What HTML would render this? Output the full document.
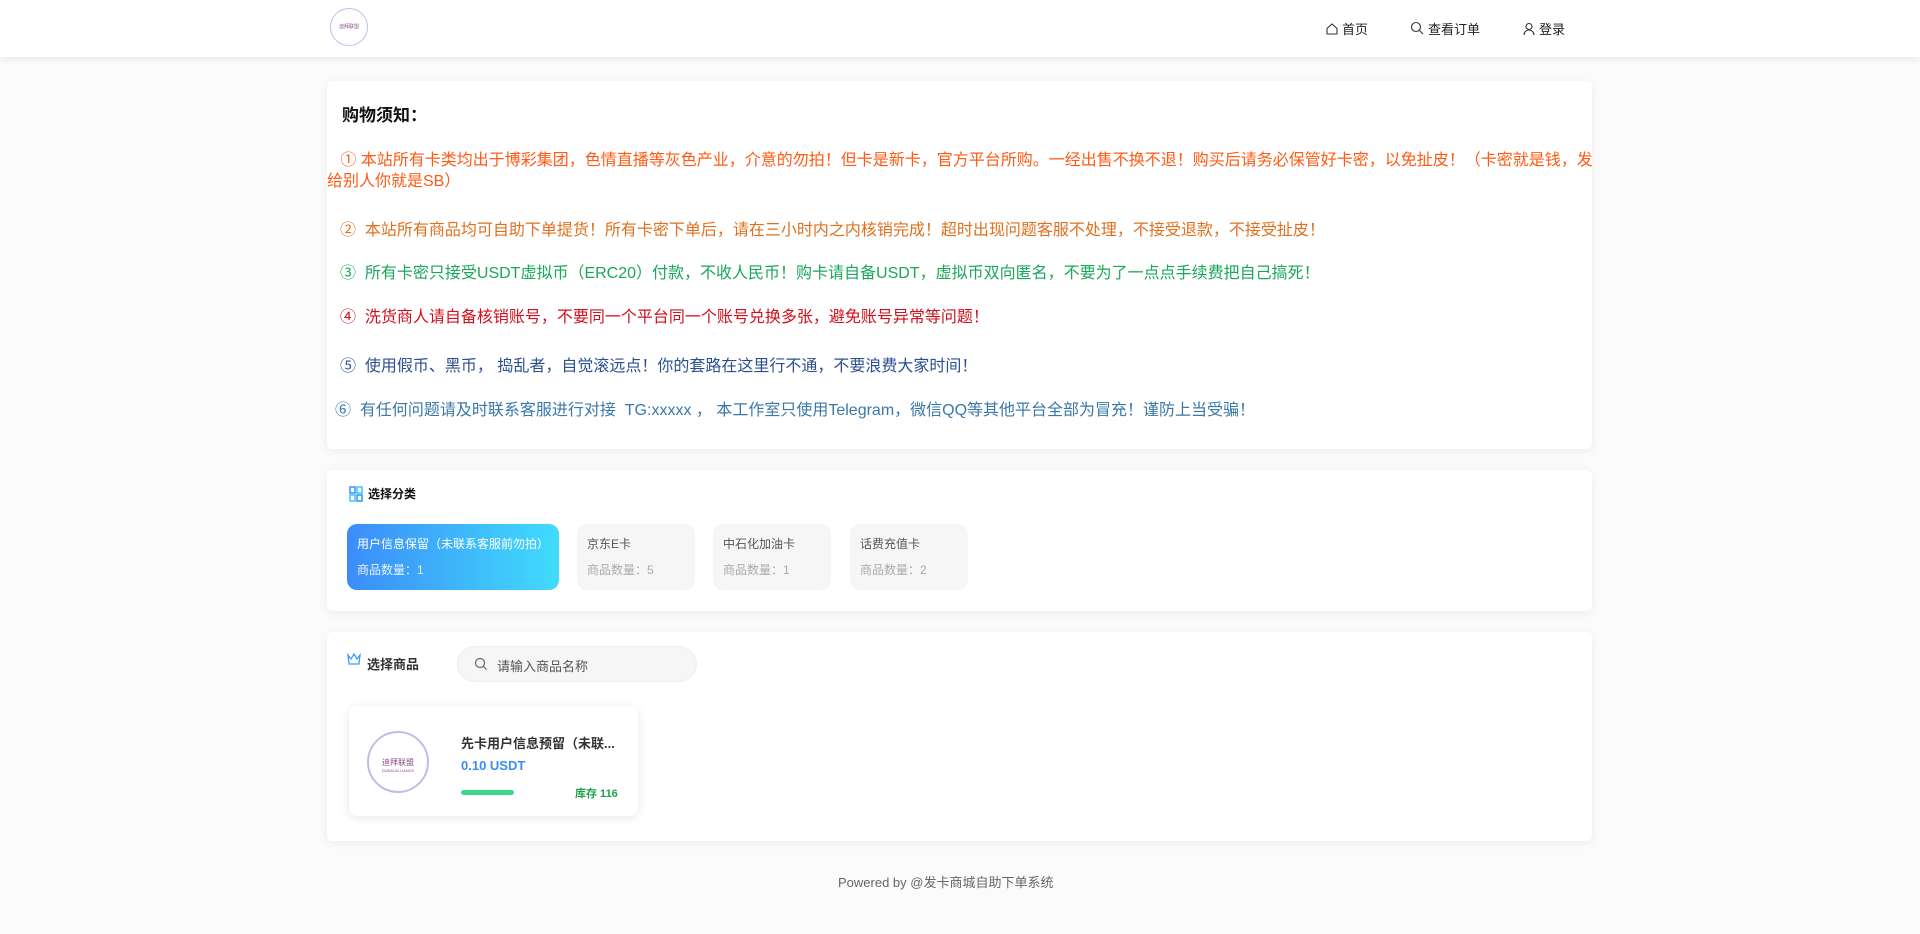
<!DOCTYPE html>
<html><head><meta charset="utf-8"><style>
*{margin:0;padding:0;box-sizing:border-box}
body{width:1920px;height:934px;background:#fbfbfc;font-family:"Liberation Sans","Noto Sans CJK SC",sans-serif;position:relative;overflow:hidden}
.hdr{position:absolute;left:0;top:0;width:1920px;height:57px;background:#fff;box-shadow:0 2px 8px rgba(0,0,0,.08)}
.logo{position:absolute;left:330px;top:8px;width:38px;height:38px;border-radius:50%;border:1px solid #c8b8e8;background:#fff;font-size:5px;color:#8a4a8a;text-align:center;padding-top:14px}
.nav{position:absolute;top:19px;font-size:13px;color:#222;display:flex;align-items:center;gap:3px}
.card{position:absolute;left:327px;width:1265px;background:#fff;border-radius:6px;box-shadow:0 2px 10px rgba(0,0,0,.06)}
.t{position:absolute;font-size:16px;white-space:nowrap}
.cat{position:absolute;top:54px;height:66px;border-radius:10px;background:#f6f6f6;padding:11px 10px;font-size:12px;color:#555}
.cat .n{margin-top:9px;color:#aaa}
</style></head><body>
<div class="hdr">
 <div class="logo">迪拜联盟</div>
 <div class="nav" style="left:1325px"><svg width="14" height="14" viewBox="0 0 14 14"><path d="M2 6.5L7 2l5 4.5V12H2z" fill="none" stroke="#333" stroke-width="1.1"/></svg>首页</div>
 <div class="nav" style="left:1410px"><svg width="15" height="15" viewBox="0 0 15 15"><circle cx="6" cy="6" r="4.5" fill="none" stroke="#333" stroke-width="1.1"/><path d="M9.5 9.5L13 13" stroke="#333" stroke-width="1.1"/></svg>查看订单</div>
 <div class="nav" style="left:1522px"><svg width="14" height="14" viewBox="0 0 14 14"><circle cx="7" cy="4.5" r="3" fill="none" stroke="#333" stroke-width="1.1"/><path d="M2 13c0-3 2.5-5 5-5s5 2 5 5" fill="none" stroke="#333" stroke-width="1.1"/></svg>登录</div>
</div>

<div class="card" style="top:81px;height:368px">
 <div class="t" style="left:15px;top:20px;font-size:17px;font-weight:bold;color:#111">购物须知：</div>
 <div style="position:absolute;left:0;top:69px;width:1279px;font-size:16px;line-height:21px;color:#ff5a14;white-space:normal">&nbsp;&nbsp;&nbsp;① 本站所有卡类均出于博彩集团，色情直播等灰色产业，介意的勿拍！但卡是新卡，官方平台所购。一经出售不换不退！购买后请务必保管好卡密，以免扯皮！（卡密就是钱，发给别人你就是SB）</div>
 <div class="t" style="left:13px;top:135px;color:#e0701c">② &nbsp;本站所有商品均可自助下单提货！所有卡密下单后，请在三小时内之内核销完成！超时出现问题客服不处理，不接受退款，不接受扯皮！</div>
 <div class="t" style="left:13px;top:178px;color:#18a858">③ &nbsp;所有卡密只接受USDT虚拟币（ERC20）付款，不收人民币！购卡请自备USDT，虚拟币双向匿名，不要为了一点点手续费把自己搞死！</div>
 <div class="t" style="left:13px;top:222px;color:#d0101c">④ &nbsp;洗货商人请自备核销账号，不要同一个平台同一个账号兑换多张，避免账号异常等问题！</div>
 <div class="t" style="left:13px;top:271px;color:#2c508f">⑤ &nbsp;使用假币、黑币， 捣乱者，自觉滚远点！你的套路在这里行不通，不要浪费大家时间！</div>
 <div class="t" style="left:8px;top:315px;color:#3a78a8">⑥ &nbsp;有任何问题请及时联系客服进行对接 &nbsp;TG:xxxxx ， 本工作室只使用Telegram，微信QQ等其他平台全部为冒充！谨防上当受骗！</div>
</div>

<div class="card" style="top:470px;height:141px">
 <svg style="position:absolute;left:22px;top:16px" width="14" height="16" viewBox="0 0 14 16"><rect x="1" y="1" width="5" height="6" fill="none" stroke="#3a8ef8" stroke-width="1.5"/><rect x="8" y="1" width="5" height="6" fill="none" stroke="#3ac8f8" stroke-width="1.5"/><rect x="1" y="9" width="5" height="6" fill="none" stroke="#3ac8f8" stroke-width="1.5"/><rect x="8" y="9" width="5" height="6" fill="none" stroke="#3a8ef8" stroke-width="1.5"/></svg>
 <div class="t" style="left:41px;top:15px;font-size:12px;font-weight:bold;color:#111">选择分类</div>
 <div class="cat" style="left:20px;width:212px;background:linear-gradient(90deg,#3c8cf8,#40dcfc);color:#fff">用户信息保留（未联系客服前勿拍）<div class="n" style="color:#e8f4ff">商品数量：1</div></div>
 <div class="cat" style="left:250px;width:118px">京东E卡<div class="n">商品数量：5</div></div>
 <div class="cat" style="left:386px;width:118px">中石化加油卡<div class="n">商品数量：1</div></div>
 <div class="cat" style="left:523px;width:118px">话费充值卡<div class="n">商品数量：2</div></div>
</div>

<div class="card" style="top:632px;height:209px">
 <svg style="position:absolute;left:20px;top:21px" width="14" height="12" viewBox="0 0 14 12"><path d="M1 2l3 4 3-5 3 5 3-4-1 9H2z" fill="none" stroke="#3a9ef8" stroke-width="1.3"/></svg>
 <div class="t" style="left:40px;top:22px;font-size:13px;font-weight:bold;color:#333">选择商品</div>
 <div style="position:absolute;left:130px;top:14px;width:240px;height:36px;border-radius:18px;background:#f6f6f6;border:1px solid #eee"></div>
 <svg style="position:absolute;left:147px;top:25px" width="14" height="14" viewBox="0 0 14 14"><circle cx="6" cy="6" r="4.5" fill="none" stroke="#666" stroke-width="1.2"/><path d="M9.5 9.5L12.5 12.5" stroke="#666" stroke-width="1.2"/></svg>
 <div class="t" style="left:170px;top:24px;font-size:13px;color:#555">请输入商品名称</div>
 <div style="position:absolute;left:22px;top:74px;width:289px;height:110px;border-radius:8px;background:#fff;box-shadow:0 2px 10px rgba(0,0,0,.1)">
  <div style="position:absolute;left:18px;top:25px;width:62px;height:62px;border-radius:50%;border:2px solid #c8b8e8;font-size:8px;color:#8a4a8a;text-align:center;padding-top:24px">迪拜联盟<div style="font-size:4px">DUBAI ALLIANCE</div></div>
  <div class="t" style="left:112px;top:27px;font-size:13px;font-weight:bold;color:#333">先卡用户信息预留（未联...</div>
  <div class="t" style="left:112px;top:52px;font-size:13px;font-weight:bold;color:#3a8ef0">0.10 USDT</div>
  <div style="position:absolute;left:112px;top:84px;width:53px;height:5px;border-radius:3px;background:#3ed88c"></div>
  <div class="t" style="left:226px;top:79px;font-size:11px;font-weight:bold;color:#1aa04a">库存 116</div>
 </div>
</div>

<div class="t" style="left:838px;top:872px;font-size:13px;color:#666">Powered by @发卡商城自助下单系统</div>
</body></html>
